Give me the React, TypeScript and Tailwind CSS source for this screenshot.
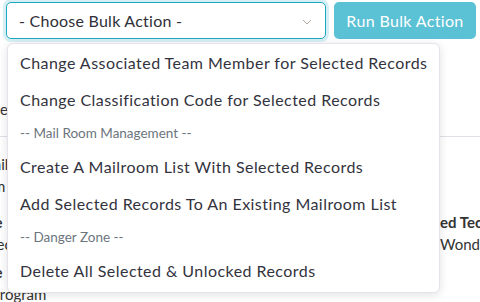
import React from "react";

const font = { fontFamily: "Lato, 'Noto Sans', sans-serif" };

function Item({ children }: { children: React.ReactNode }) {
  return (
    <div className="h-[37px] flex items-center px-[12px] text-[16px] tracking-[0.45px] text-[#33333d] whitespace-nowrap">
      {children}
    </div>
  );
}

function Header({ children }: { children: React.ReactNode }) {
  return (
    <div className="h-[30px] flex items-center px-[12px] text-[13.5px] text-[#6c757d] whitespace-nowrap">
      {children}
    </div>
  );
}

export default function App() {
  return (
    <div
      className="relative w-[480px] h-[302px] overflow-hidden bg-white text-[#222]"
      style={font}
    >
      {/* top bar */}
      <div className="flex items-start gap-[8px] pl-[6px] pt-[2px]">
        <div className="relative w-[320px] h-[37px] rounded-[5px] border border-[#1ea7c1] bg-white shadow-[0_0_0_3px_#d6eff4] flex items-center pl-[12px]">
          <span className="text-[16px] tracking-[0.25px] text-[#2f2f38]">- Choose Bulk Action -</span>
          <svg
            className="absolute right-[13px] top-[16px]"
            width="10"
            height="6"
            viewBox="0 0 10 6"
            fill="none"
          >
            <path d="M1 1L5 5L9 1" stroke="#b3a9a4" strokeWidth="1" />
          </svg>
        </div>
        <button className="h-[37px] w-[142px] rounded-[5px] bg-[#5bc1d4] text-white text-[16px] tracking-[0.35px] flex items-center justify-center">
          Run Bulk Action
        </button>
      </div>

      {/* background page content */}
      <div className="text-[15px] text-[#333]">
        <div className="h-[97px] flex flex-col justify-end pb-[16px]">
          <div className="whitespace-nowrap -ml-[31px]">Name</div>
        </div>
        <div className="border-t border-[#dee2e6]" />
        <div className="flex justify-between pt-[16px]">
          <div className="flex flex-col leading-[22px]">
            <div className="whitespace-nowrap -ml-[27px]">Email</div>
            <div className="whitespace-nowrap -ml-[50px]">Program</div>
            <div className="h-[14px]" />
            <div className="whitespace-nowrap -ml-[37px] font-bold">Name</div>
            <div className="whitespace-nowrap -ml-[23px]">Select</div>
            <div className="h-[6px]" />
            <div className="whitespace-nowrap -ml-[37px] font-bold">Name</div>
            <div className="whitespace-nowrap -ml-[9px]">Program</div>
          </div>
          <div className="flex flex-col leading-[22px] w-[40px] overflow-hidden">
            <div className="h-[58px]" />
            <div className="whitespace-nowrap font-bold">ed Tech</div>
            <div className="whitespace-nowrap">Wonder</div>
          </div>
        </div>
      </div>

      {/* dropdown menu */}
      <div className="absolute left-[7px] top-[43px] w-[433px] rounded-[6px] border border-[#e4e4ea] bg-white shadow-[0_2px_10px_rgba(0,0,0,0.12)] pb-[3px]">
        <Item>Change Associated Team Member for Selected Records</Item>
        <Item>Change Classification Code for Selected Records</Item>
        <Header>-- Mail Room Management --</Header>
        <Item>Create A Mailroom List With Selected Records</Item>
        <Item>Add Selected Records To An Existing Mailroom List</Item>
        <Header>-- Danger Zone --</Header>
        <Item>Delete All Selected &amp; Unlocked Records</Item>
      </div>
    </div>
  );
}
